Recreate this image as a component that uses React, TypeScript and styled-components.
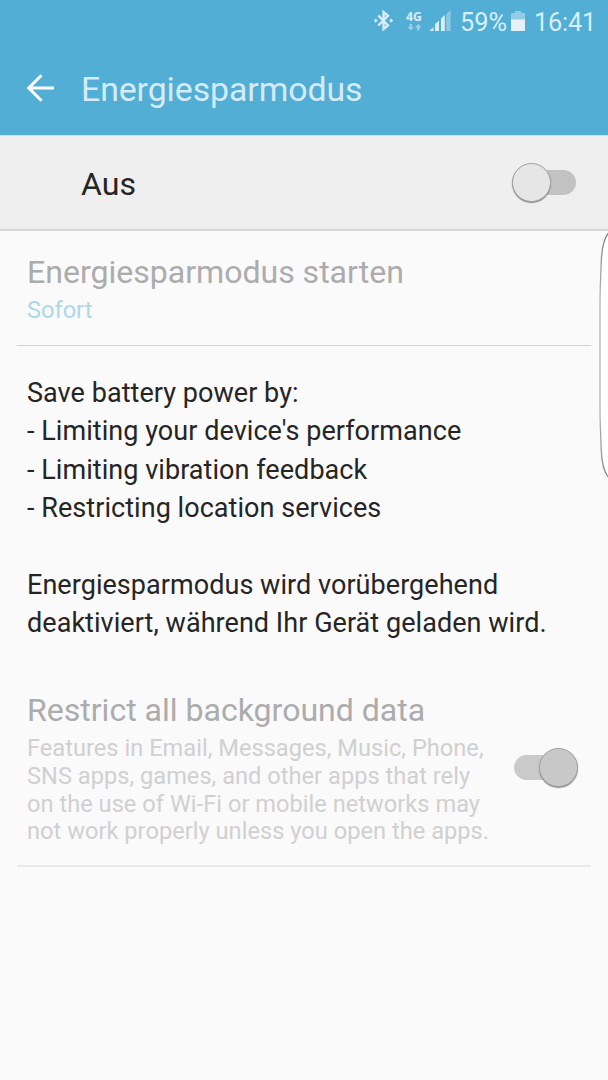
import React from 'react';
import styled, { createGlobalStyle } from 'styled-components';

const GlobalStyle = createGlobalStyle`
  html, body { margin: 0; padding: 0; background: #fafafa; }
  * { box-sizing: border-box; }
  body { font-family: Roboto, 'Liberation Sans', sans-serif; overflow: hidden; }
`;

const Screen = styled.div`
  position: relative;
  width: 608px;
  height: 1080px;
  overflow: hidden;
  background: #fafafa;
  color: #252525;
`;

const Header = styled.header`
  height: 135px;
  background: #52aed5;
`;

const StatusBar = styled.div`
  height: 44px;
  display: flex;
  justify-content: flex-end;
  align-items: flex-start;
  color: #d9eef7;
`;

const StatusIcons = styled.svg`
  width: 86px;
  height: 44px;
  flex: none;
`;

const StatusText = styled.span<{ $width: number; $spacing?: number }>`
  width: ${(p) => p.$width}px;
  font-size: 25.3px;
  line-height: 30px;
  padding-top: 8px;
  letter-spacing: ${(p) => p.$spacing ?? 0}px;
  white-space: nowrap;
`;

const BatteryIcon = styled.svg`
  width: 24px;
  height: 44px;
  flex: none;
`;

const AppBar = styled.div`
  height: 91px;
  display: flex;
  align-items: center;
  padding-left: 26px;
`;

const BackArrow = styled.svg`
  width: 30px;
  height: 30px;
  margin: -4px 25px 0 0;
`;

const Title = styled.h1`
  margin: 0;
  font-size: 33.8px;
  line-height: 40px;
  font-weight: 400;
  letter-spacing: -0.06px;
  color: #d5ebf5;
`;

const MasterRow = styled.div`
  height: 96px;
  display: flex;
  align-items: center;
  justify-content: space-between;
  padding: 0 32px 0 81px;
  background: #efefef;
  border-top: 1px solid #d5dee2;
  border-bottom: 2px solid #d6d6d6;
`;

const MasterLabel = styled.span`
  font-size: 32.1px;
  line-height: 38px;
  padding-top: 2px;
`;

const Section = styled.section<{ $height: number; $top?: number; $line: string; $lineWidth?: number }>`
  height: ${(p) => p.$height}px;
  margin: 0 17px;
  padding: ${(p) => p.$top ?? 0}px 10px 0;
  border-bottom: ${(p) => p.$lineWidth ?? 1}px solid ${(p) => p.$line};
`;

const ItemTitle = styled.div`
  font-size: 32.1px;
  line-height: 38px;
  letter-spacing: -0.02px;
  color: #acacac;
  white-space: nowrap;
`;

const ItemValue = styled.div`
  font-size: 23.6px;
  line-height: 28px;
  margin-top: 5px;
  color: #add8e8;
`;

const Info = styled.div`
  padding: 28px 27px 0;
  height: 345px;
  font-size: 27px;
  line-height: 38.4px;
  letter-spacing: 0.05px;
  white-space: nowrap;
`;

const Paragraph = styled.p`
  margin: 0 0 38.4px;
`;

const DataRow = styled.div`
  display: flex;
  justify-content: space-between;
  align-items: center;
  padding-right: 3px;
`;

const Description = styled.div`
  font-size: 23.6px;
  line-height: 27.8px;
  letter-spacing: 0.03px;
  margin-top: 6px;
  color: #d0d0d0;
  white-space: nowrap;
`;

const Track = styled.div<{ $on?: boolean; $disabled?: boolean }>`
  flex: none;
  width: 64px;
  height: 39px;
  display: flex;
  align-items: center;
  justify-content: ${(p) => (p.$on ? 'flex-end' : 'flex-start')};
  position: relative;
  margin-bottom: ${(p) => (p.$on ? 3 : 0)}px;
  &::before {
    content: '';
    position: absolute;
    top: 7px;
    ${(p) => (p.$on ? 'left: 0;' : 'right: 0;')}
    width: 56px;
    height: 25px;
    border-radius: 13px;
    background: ${(p) => (p.$disabled ? '#cacaca' : '#c2c2c2')};
  }
`;

const Knob = styled.div<{ $disabled?: boolean }>`
  position: relative;
  width: 39px;
  height: 39px;
  border-radius: 50%;
  background: ${(p) => (p.$disabled ? '#c8c8c8' : '#e6e6e6')};
  border: 1px solid #a2a2a2;
  box-shadow: 0 1px 1px #888;
`;

const EdgeHandle = styled.svg`
  position: absolute;
  right: 0;
  top: 231px;
  width: 12px;
  height: 250px;
`;

function Switch({ on, disabled }: { on?: boolean; disabled?: boolean }) {
  return (
    <Track $on={on} $disabled={disabled} role="switch" aria-checked={!!on}>
      <Knob $disabled={disabled} />
    </Track>
  );
}

export default function App() {
  return (
    <>
      <GlobalStyle />
      <Screen>
        <Header>
          <StatusBar>
            <StatusIcons viewBox="0 0 86 44">
              <path d="M4.300 15.500L14 25.400 9.600 29V12L14 15.800 4.300 25.500" fill="none" stroke="#d9eef7" strokeWidth="2.400" />
              <path d="M1.500 18.500l2.200 2.100-2.200 2.100L0 20.600zM17 18.500l2.200 2.100-2.200 2.100-1.700-2.100z" fill="#d9eef7" />
              <text x="32" y="21" fontFamily="'Open Sans', sans-serif" fontSize="12.300" fontWeight="700" fill="#d9eef7">4G</text>
              <path d="M36 24v3h2l-3.200 3.500-3.200-3.500h2V24zM41 30.500v-3h-2l3.200-3.500 3.200 3.500h-2v3z" fill="#9dd0e8" transform="translate(2 0)" />
              <path d="M56 31v-.8l3.500-3V31zM61 31v-7l4-3.600V31zM67 31V18.500l3.800-3.500v16z" fill="#d9eef7" />
              <path d="M72.200 31V14l4.400-4v21z" fill="#8dc8e2" />
            </StatusIcons>
            <StatusText $width={50}>59%</StatusText>
            <BatteryIcon viewBox="0 0 24 44">
              <path d="M1 13h4v-2h6v2h4v7H1z" fill="#94cce5" />
              <path d="M1 19.500h14V31H1z" fill="#e4f2f8" />
            </BatteryIcon>
            <StatusText $width={74} $spacing={-0.2}>16:41</StatusText>
          </StatusBar>
          <AppBar>
            <BackArrow viewBox="0 0 30 30">
              <path d="M28 15H3M15.500 2.300L2.800 15l12.700 12.700" fill="none" stroke="#fff" strokeWidth="3" />
            </BackArrow>
            <Title>Energiesparmodus</Title>
          </AppBar>
        </Header>
        <MasterRow>
          <MasterLabel>Aus</MasterLabel>
          <Switch />
        </MasterRow>
        <Section $height={115} $top={22} $line="#d4d4d4">
          <ItemTitle>Energiesparmodus starten</ItemTitle>
          <ItemValue>Sofort</ItemValue>
        </Section>
        <Info>
          <Paragraph>
            Save battery power by:
            <br />- Limiting your device's performance
            <br />- Limiting vibration feedback
            <br />- Restricting location services
          </Paragraph>
          <Paragraph>
            Energiesparmodus wird vorübergehend
            <br />
            deaktiviert, während Ihr Gerät geladen wird.
          </Paragraph>
        </Info>
        <Section $height={176} $line="#e9e9e9" $lineWidth={2}>
          <DataRow>
            <div>
              <ItemTitle>Restrict all background data</ItemTitle>
              <Description>
                Features in Email, Messages, Music, Phone,
                <br />
                SNS apps, games, and other apps that rely
                <br />
                on the use of Wi-Fi or mobile networks may
                <br />
                not work properly unless you open the apps.
              </Description>
            </div>
            <Switch on disabled />
          </DataRow>
        </Section>
        <EdgeHandle viewBox="0 0 12 250">
          <defs>
            <linearGradient id="edge" gradientUnits="userSpaceOnUse" x1="0" y1="0" x2="0" y2="250">
              <stop offset="0" stopColor="#7e7e7e" />
              <stop offset="0.25" stopColor="#b4b4b4" />
              <stop offset="0.75" stopColor="#b4b4b4" />
              <stop offset="1" stopColor="#7e7e7e" />
            </linearGradient>
          </defs>
          <path
            d="M13 1.500C7.500 7 5.700 18 5.200 32C4.700 48 4 58 4 72V178C4 192 4.700 202 5.200 218C5.700 232 7.500 241 13 247"
            fill="#fff"
            stroke="url(#edge)"
            strokeWidth="1.300"
          />
        </EdgeHandle>
      </Screen>
    </>
  );
}
